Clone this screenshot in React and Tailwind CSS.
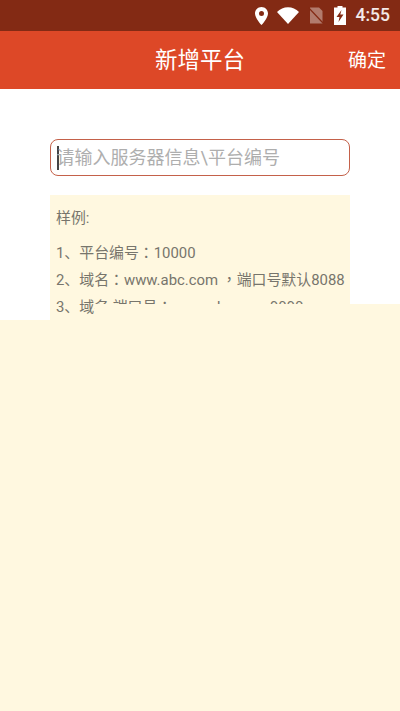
const cjk = "font-['Roboto','Noto_Sans_CJK_SC',sans-serif]";
const tc = "font-['Noto_Sans_CJK_TC',sans-serif]";

function StatusIcons() {
  return (
    <div className="flex items-center">
      {/* location pin */}
      <svg width="13" height="18" viewBox="0 0 13 18">
        <path fillRule="evenodd" fill="#fff" d="M6.500 0C2.900 0 0 2.900 0 6.500 0 11.300 6.500 18 6.500 18S13 11.300 13 6.500C13 2.900 10.100 0 6.500 0zM6.500 9a2.500 2.500 0 1 1 0-5 2.500 2.500 0 0 1 0 5z" />
      </svg>
      {/* wifi */}
      <svg width="22" height="17" viewBox="0 0 22 17" className="ml-[9px]">
        <path fill="#fff" d="M11 17L0 5C3 2 6.800.3 11 .3S19 2 22 5z" />
      </svg>
      {/* sim, none */}
      <svg width="16" height="17" viewBox="0 0 16 17" className="ml-[9px]">
        <path fill="#fff" fillOpacity="0.38" d="M2 .5h9l3.500 3.500v12.500H2z" />
        <path stroke="#832a14" strokeWidth="1.200" d="M0 0L15 16" />
      </svg>
      {/* battery charging */}
      <svg width="12" height="19" viewBox="0 0 12 19" className="ml-[10px]">
        <path fillRule="evenodd" fill="#fff" d="M3.500 0h5v1.500H12V19H0V1.500h3.500zM7.500 4L2.500 11h3l-1 5 5-7.500H6.300z" />
      </svg>
      <span className="ml-[10px] font-['Roboto',sans-serif] text-[17.500px] leading-none font-medium text-white/90">4:55</span>
    </div>
  );
}

export default function App() {
  return (
    <div className={`relative flex h-[711px] w-[400px] flex-col overflow-hidden bg-white ${cjk}`}>
      <div className="flex h-[31px] items-center justify-end bg-[#832a14] pr-[10px]">
        <StatusIcons />
      </div>
      <div className="relative flex h-[58px] items-center justify-center bg-[#dd4827] pt-[2px]">
        <span className="text-[22.500px] text-white">新增平台</span>
        <span className="absolute right-[14px] text-[19px] text-white">确定</span>
      </div>

      <div className="px-[50px] pt-[50px]">
        <div className="flex h-[37px] items-center rounded-[8px] border border-[#c4614a] pl-[5.500px]">
          <span className="-mr-[2px] h-[24px] w-[2px] bg-[#444]" />
          <span className="text-[18px] text-[#aeaeae]">请输入服务器信息\平台编号</span>
        </div>
        <div className="mt-[19px] h-[200px] bg-[#fff8e0] px-[6px] pt-[12px] text-[14.900px] text-[#77756c]">
          <div className="leading-[22px]">样例:</div>
          <div className="mt-[9px] h-[27px] leading-[27px]">1、平台编号<span className={tc}>：</span>10000</div>
          <div className="h-[27px] leading-[27px] whitespace-nowrap">2、域名<span className={tc}>：</span>www.abc.com <span className={tc}>，</span>端口号默认8088</div>
          <div className="h-[27px] leading-[27px] whitespace-nowrap">3、域名:端口号<span className={tc}>：</span>www.abc.com:9090</div>
        </div>
      </div>

      {/* cream sheet lying over the bottom of the list */}
      <div className="absolute inset-x-0 bottom-0 top-[320px] bg-[#fff8e0]" />
      <div className="absolute bottom-0 left-[95px] right-0 top-[304px] bg-[#fff8e0]" />
    </div>
  );
}
